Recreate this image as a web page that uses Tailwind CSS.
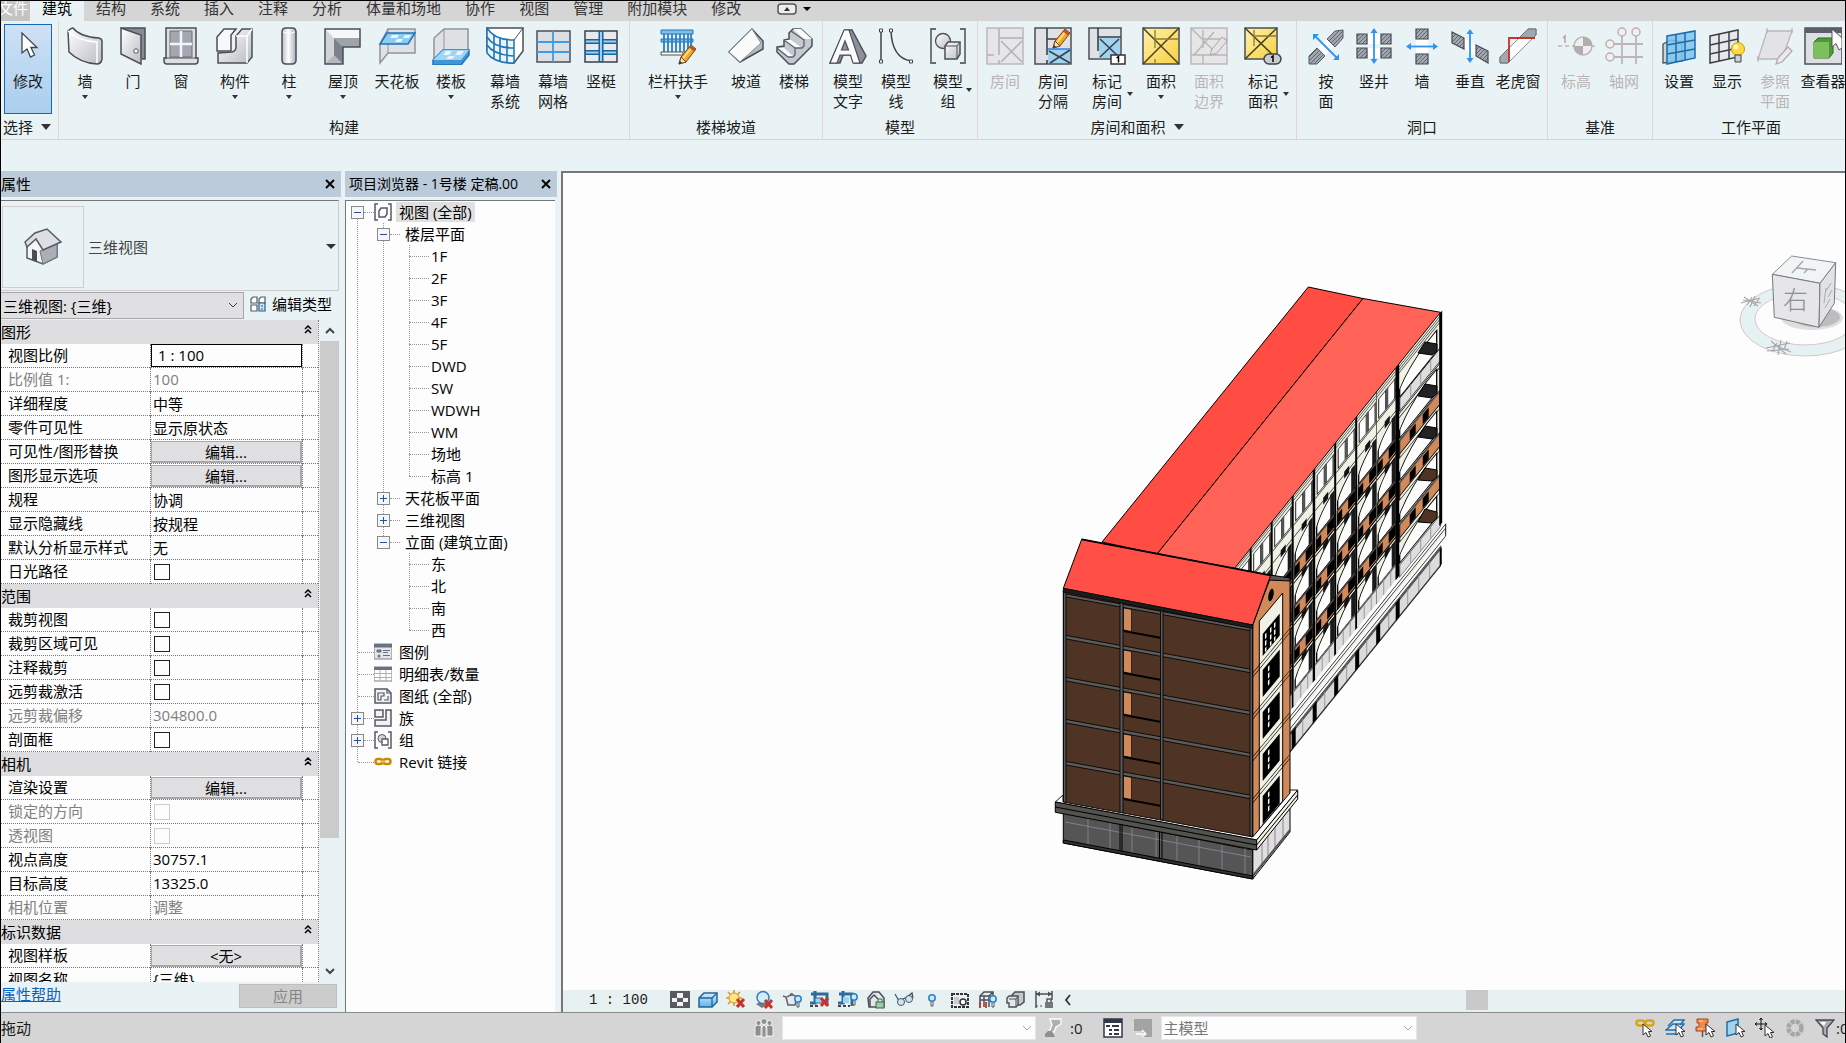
<!DOCTYPE html>
<html lang="zh-CN">
<head>
    <meta charset="UTF-8">
    <meta name="viewport" content="width=device-width, initial-scale=1.0">
    <title>1号楼 定稿.00 - 三维视图</title>
    <script src="https://cdn.jsdelivr.net/npm/@tailwindcss/browser@4"></script>
</head>
<body class="h-screen overflow-hidden flex flex-col border-t border-x border-black bg-[#e9f3f5] text-[15px] leading-5 text-[#1c1c1c] font-['Open_Sans','Noto_Sans_CJK_SC',sans-serif]">

    <!-- Shared fills and symbols -->
    <svg class="absolute w-0 h-0" aria-hidden="true">
        <defs>
            <linearGradient id="metal" x1="0" y1="0" x2="1" y2="1"><stop offset="0" stop-color="#ffffff"/><stop offset="1" stop-color="#b9bcc4"/></linearGradient>
            <linearGradient id="cyl" x1="0" y1="0" x2="1" y2="0"><stop offset="0" stop-color="#b9bcc4"/><stop offset=".45" stop-color="#fff"/><stop offset="1" stop-color="#a9adb6"/></linearGradient>
            <linearGradient id="blue" x1="0" y1="0" x2="0" y2="1"><stop offset="0" stop-color="#d4eefc"/><stop offset="1" stop-color="#5fb3e6"/></linearGradient>
            <linearGradient id="gold" x1="0" y1="0" x2="1" y2="1"><stop offset="0" stop-color="#fff1a8"/><stop offset="1" stop-color="#f6d043"/></linearGradient>
            <pattern id="hatch" width="4" height="4" patternUnits="userSpaceOnUse"><rect width="4" height="4" fill="#a3a8b0"/><path d="M0 4L4 0" stroke="#5f656e" stroke-width="1"/></pattern>
            <g id="pencil"><path d="M2 20L4 13L14 1L19 5L9 18Z" fill="#f5a623" stroke="#6b4a1d"/><path d="M6 14.500L15 3" stroke="#ffdf8a" stroke-width="2"/><path d="M14 1L19 5L17 7.500L12 3.500Z" fill="#b9542e"/><path d="M2 20L4 13L9 18Z" fill="#f3dfc1" stroke="#6b4a1d"/><path d="M2 20L3 17L5 19Z" fill="#333"/></g>
            <g id="arrowcur"><path d="M1 1V12L4 9.500L6 14L8.500 13L6.500 8.500H10Z" fill="#fff" stroke="#333"/></g>
            <g id="redx"><path d="M1 1L8 9M8 1L1 9" stroke="#c8322b" stroke-width="3"/></g>
            <g id="bulb"><circle cx="4" cy="4" r="3.200" fill="#cfeaff" stroke="#2b7fc4" stroke-width="1.500"/><path d="M3 8V12H5V8" fill="#fff" stroke="#555"/></g>
        </defs>
    </svg>

    <!-- Ribbon tabs -->
    <nav class="h-5 shrink-0 flex bg-[#d5d5d5] text-[#333] leading-[14px] whitespace-nowrap">
        <a href="#" class="w-[29px] flex justify-end pr-0.5 bg-[#c4c4c4] text-white overflow-hidden">文件</a>
        <a href="#" class="px-3 bg-[#e9f3f5] text-black">建筑</a>
        <a href="#" class="px-3">结构</a>
        <a href="#" class="px-3">系统</a>
        <a href="#" class="px-3">插入</a>
        <a href="#" class="px-3">注释</a>
        <a href="#" class="px-3">分析</a>
        <a href="#" class="px-3">体量和场地</a>
        <a href="#" class="px-3">协作</a>
        <a href="#" class="px-3">视图</a>
        <a href="#" class="px-3">管理</a>
        <a href="#" class="px-3">附加模块</a>
        <a href="#" class="px-3">修改</a>
        <button class="ml-6 pb-1 flex items-center gap-1.5" aria-label="功能区显示">
            <svg class="w-5 h-3" viewBox="0 0 20 12"><rect x="1" y="1" width="18" height="10" rx="3" fill="#eee" stroke="#555" stroke-width="1.500"/><path d="M7 8L10 4L13 8Z" fill="#333"/></svg>
            <svg class="w-2 h-1.5" viewBox="0 0 8 6"><path d="M0 1H8L4 5Z" fill="#000"/></svg>
        </button>
    </nav>

    <!-- Ribbon -->
    <div class="h-[119px] shrink-0 flex border-b border-[#d3d3d6] overflow-hidden whitespace-nowrap">
        <section class="w-[58px] shrink-0 flex flex-col border-r border-[#e6d4d4]">
            <div class="h-24 pl-[3px] pt-[3px]">
                <button class="w-12 h-[90px] pt-0.5 flex flex-col items-center gap-1.5 border border-[#1767b3] bg-linear-to-b from-[#cfe0f5] to-[#a9cfee]">
                    <svg class="size-[38px]" viewBox="0 0 38 38"><path d="M13 6V26L18 22L21.500 30L25.500 28L22 20.500H28Z" fill="#fff" stroke="#3f4650" stroke-width="1.300"/></svg>
                    <span>修改</span>
                </button>
            </div>
            <button class="h-5 pl-0.5 flex items-center gap-2">选择<svg class="w-2.5 h-1.5" viewBox="0 0 10 6"><path d="M0 0H10L5 6Z" fill="#333"/></svg></button>
        </section>

        <section class="shrink-0 flex flex-col border-r border-[#e6d4d4]">
            <div class="h-24 flex pl-0.5 pr-1">
                <button class="w-12 pt-1.5 flex flex-col items-center">
                    <svg class="size-[38px] mb-1.5" viewBox="0 0 38 38"><path d="M2 4Q5 1 7 1Q14 10 33 11Q36 12 36 14V32Q35 37 31 37Q14 36 3 25Z" fill="url(#metal)" stroke="#4b4f57" stroke-width="1.500"/><path d="M2 4Q12 14 31 15V36" fill="none" stroke="#fff" stroke-width="1.500"/></svg>
                    <span>墙</span><svg class="w-1.5 h-1 mt-1" viewBox="0 0 6 4"><path d="M0 0H6L3 4Z" fill="#333"/></svg>
                </button>
                <button class="w-12 pt-1.5 flex flex-col items-center">
                    <svg class="size-[38px] mb-1.5" viewBox="0 0 38 38"><path d="M7 1H31V32H28" fill="#868b94" stroke="#4b4f57" stroke-width="1.500"/><path d="M7 1L27 8V37L7 27Z" fill="url(#metal)" stroke="#4b4f57" stroke-width="1.500"/><circle cx="22" cy="24" r="2.200" fill="#fff" stroke="#4b4f57"/></svg>
                    <span>门</span>
                </button>
                <button class="w-12 pt-1.5 flex flex-col items-center">
                    <svg class="size-[38px] mb-1.5" viewBox="0 0 38 38"><path d="M4 1H34V31H36V34Q36 37 33 37H5Q2 37 2 34V31H4Z" fill="#dcdee2" stroke="#4b4f57" stroke-width="1.500"/><path d="M8 4H30V30H8Z" fill="#a3a7b0" stroke="#6b7079"/><path d="M19 4V30M8 17H30" stroke="#f4f5f7" stroke-width="2.500"/><path d="M3 31H35" stroke="#4b4f57"/></svg>
                    <span>窗</span>
                </button>
                <button class="w-15 pt-1.5 flex flex-col items-center">
                    <svg class="size-[38px] mb-1.5" viewBox="0 0 38 38"><path d="M8 2H20L15 8V24H1V10Z" fill="#f7f8f9" stroke="#4b4f57" stroke-width="1.500"/><path d="M26 2H36V30L31 36H2V26L16 25Q20 24 20 20V9Z" fill="url(#metal)" stroke="#4b4f57" stroke-width="1.500"/><path d="M20 9H31L36 2M31 9V36" fill="none" stroke="#fff" stroke-width="1.500"/></svg>
                    <span>构件</span><svg class="w-1.5 h-1 mt-1" viewBox="0 0 6 4"><path d="M0 0H6L3 4Z" fill="#333"/></svg>
                </button>
                <button class="w-12 pt-1.5 flex flex-col items-center">
                    <svg class="size-[38px] mb-1.5" viewBox="0 0 38 38"><path d="M12 5Q12 1 16 1H22Q26 1 26 5V33Q26 37 22 37H16Q12 37 12 33Z" fill="url(#cyl)" stroke="#4b4f57" stroke-width="1.500"/><path d="M13 5Q19 8 25 5" fill="none" stroke="#fff"/></svg>
                    <span>柱</span><svg class="w-1.5 h-1 mt-1" viewBox="0 0 6 4"><path d="M0 0H6L3 4Z" fill="#333"/></svg>
                </button>
                <button class="w-15 pt-1.5 flex flex-col items-center">
                    <svg class="size-[38px] mb-1.5" viewBox="0 0 38 38"><path d="M1 2H36V20H19V37H1Z" fill="#d2d4d9"/><path d="M1 2L10 11H36V2Z" fill="#f6f7f8"/><path d="M10 11H36V20H19Z" fill="#9fa3ac"/><path d="M10 11L19 20V37H10Z" fill="#7d818b"/><path d="M1 37L10 28L19 37Z" fill="#b5b8bf"/><path d="M1 2H36V20H19V37H1Z" fill="none" stroke="#4b4f57" stroke-width="1.500"/></svg>
                    <span>屋顶</span><svg class="w-1.5 h-1 mt-1" viewBox="0 0 6 4"><path d="M0 0H6L3 4Z" fill="#333"/></svg>
                </button>
                <button class="w-12 pt-1.5 flex flex-col items-center">
                    <svg class="size-[38px] mb-1.5" viewBox="0 0 38 38"><path d="M2 17L10 2H37V26H10L2 36Z" fill="#dfe1e5" stroke="#90949c" stroke-width="1.500"/><path d="M10 2V26" stroke="#90949c"/><path d="M9 6H37L30 17H2Z" fill="#8ecbf2" stroke="#1f74b8" stroke-width="1.500"/><path d="M14 8H21L19 11H12ZM27 8H33L31 11H25ZM19 12H25L23 15H17Z" fill="#e8f6ff"/></svg>
                    <span>天花板</span>
                </button>
                <button class="w-15 pt-1.5 flex flex-col items-center">
                    <svg class="size-[38px] mb-1.5" viewBox="0 0 38 38"><path d="M2 33V11L12 2H36V26" fill="#dfe1e5" stroke="#90949c" stroke-width="1.500"/><path d="M12 2V24" stroke="#90949c"/><path d="M11 23H37V28L29 38H1V33Z" fill="#3f97d6" stroke="#1f74b8" stroke-width="1.500"/><path d="M11 23H37L29 33H1Z" fill="#9fd4f6"/><path d="M14 24H20L17 28H11ZM26 24H32L29 28H23ZM17 29H23L20 32H14Z" fill="#e8f6ff"/></svg>
                    <span>楼板</span><svg class="w-1.5 h-1 mt-1" viewBox="0 0 6 4"><path d="M0 0H6L3 4Z" fill="#333"/></svg>
                </button>
                <button class="w-12 pt-1.5 flex flex-col items-center">
                    <svg class="size-[38px] mb-1.5" viewBox="0 0 38 38"><path d="M1 1H37V24L28 36Q8 36 1 24Z" fill="#fff" stroke="#4b4f57" stroke-width="1.500"/><path d="M1 1Q8 13 28 13V36Q8 36 1 26Z" fill="#e9f4fd" stroke="#1f74b8" stroke-width="1.500"/><path d="M28 13L37 1" stroke="#4b4f57"/><path d="M1 10Q8 21 28 21M1 18Q8 28 28 29M8 8V32M14 11V35M21 13V36" fill="none" stroke="#1f74b8" stroke-width="1.600"/></svg>
                    <span>幕墙</span><span>系统</span>
                </button>
                <button class="w-12 pt-1.5 flex flex-col items-center">
                    <svg class="size-[38px] mb-1.5" viewBox="0 0 38 38"><rect x="3" y="4" width="33" height="31" fill="#dbdee3" stroke="#4b4f57" stroke-width="1.500"/><path d="M19 4V35M3 15H36M3 25H36" stroke="#3d9be0" stroke-width="1.800"/></svg>
                    <span>幕墙</span><span>网格</span>
                </button>
                <button class="w-12 pt-1.5 flex flex-col items-center">
                    <svg class="size-[38px] mb-1.5" viewBox="0 0 38 38"><rect x="3" y="4" width="32" height="31" fill="#e8eaed" stroke="#3b4048" stroke-width="1.500"/><path d="M3 14.500H35M3 25.500H35" stroke="#17649f" stroke-width="5"/><path d="M4 14.500H34M4 25.500H34" stroke="#9fd0f2" stroke-width="2"/><path d="M19 4V35" stroke="#17649f" stroke-width="5"/><path d="M19 5V34" stroke="#9fd0f2" stroke-width="2"/></svg>
                    <span>竖梃</span>
                </button>
            </div>
            <h2 class="h-5 text-center">构建</h2>
        </section>

        <section class="shrink-0 flex flex-col border-r border-[#e6d4d4]">
            <div class="h-24 flex px-1">
                <button class="w-22 pt-1.5 flex flex-col items-center">
                    <svg class="size-[38px] mb-1.5" viewBox="0 0 38 38"><path d="M2 3H34V7H2ZM2 12H34V15H2Z" fill="#7fc0ee" stroke="#1f74b8"/><path d="M5 7V25M9 7V25M13 7V25M17 7V25M21 7V25M25 7V25M29 7V25M32 7V25" stroke="#2d80c2" stroke-width="1.800"/><path d="M2 25H24V28H2Z" fill="#fff" stroke="#4b4f57"/><use href="#pencil" x="18" y="17"/></svg>
                    <span>栏杆扶手</span><svg class="w-1.5 h-1 mt-1" viewBox="0 0 6 4"><path d="M0 0H6L3 4Z" fill="#333"/></svg>
                </button>
                <button class="w-12 pt-1.5 flex flex-col items-center">
                    <svg class="size-[38px] mb-1.5" viewBox="0 0 38 38"><path d="M2 25L25 2L36 14V22L13 35Z" fill="#b8bbc2" stroke="#4b4f57" stroke-width="1.500"/><path d="M2 25L25 2L34 16L13 35Z" fill="#fafbfb" stroke="#888c94"/></svg>
                    <span>坡道</span>
                </button>
                <button class="w-12 pt-1.5 flex flex-col items-center">
                    <svg class="size-[38px] mb-1.5" viewBox="0 0 38 38"><path d="M18 2H26L37 12V19L19 37H14L2 25V20L9 19V13L14 12V6Z" fill="#c6c9cf" stroke="#4b4f57" stroke-width="1.500"/><path d="M18 2H26L37 12H29ZM9 13H16L27 21H20ZM2 21H9L19 30H13Z" fill="#fafbfb"/><path d="M29 12V19L27 21H20V28L18 30H13L2 21M16 4L29 13M9 13L20 21" fill="none" stroke="#5d626b" stroke-width="1.300"/></svg>
                    <span>楼梯</span>
                </button>
            </div>
            <h2 class="h-5 text-center">楼梯坡道</h2>
        </section>

        <section class="shrink-0 flex flex-col border-r border-[#e6d4d4]">
            <div class="h-24 flex px-px">
                <button class="w-12 pt-1.5 flex flex-col items-center">
                    <svg class="size-[38px] mb-1.5" viewBox="0 0 38 38"><path d="M16 3H23L37 29L33 36H25L23 28H14L11 36H1Z" fill="#8d919a" stroke="#4b4f57" stroke-width="1.500"/><path d="M15 3H20L31 36H24L21.500 28H11L8 36H1ZM16 14L12.500 23H19.500Z" fill="#fbfbfc" fill-rule="evenodd" stroke="#4b4f57" stroke-width="1.200"/></svg>
                    <span>模型</span><span>文字</span>
                </button>
                <button class="w-12 pt-1.5 flex flex-col items-center">
                    <svg class="size-[38px] mb-1.5" viewBox="0 0 38 38"><path d="M4 4V34M14 4Q15 31 34 34" fill="none" stroke="#3f444c" stroke-width="1.500"/><path d="M2.500 2H5.500V5H2.500ZM2.500 33H5.500V36H2.500ZM12.500 2H15.500V5H12.500ZM32.500 33H35.500V36H32.500Z" fill="#fff" stroke="#3f444c"/></svg>
                    <span>模型</span><span>线</span>
                </button>
                <button class="w-14 pt-1.5 relative flex flex-col items-center">
                    <svg class="size-[38px] mb-1.5" viewBox="0 0 38 38"><path d="M7 2H2V36H7M31 2H36V36H31" fill="none" stroke="#666b74" stroke-width="1.800"/><circle cx="14" cy="14" r="7.500" fill="url(#metal)" stroke="#4b4f57" stroke-width="1.300"/><path d="M16 19L19 15H31V27L28 32H16Z" fill="url(#metal)" stroke="#4b4f57" stroke-width="1.500"/><path d="M16 19H28L31 15M28 19V32" fill="none" stroke="#4b4f57"/></svg>
                    <span>模型</span><span>组</span>
                    <svg class="absolute right-1 top-[67px] w-1.5 h-1" viewBox="0 0 6 4"><path d="M0 0H6L3 4Z" fill="#333"/></svg>
                </button>
            </div>
            <h2 class="h-5 text-center">模型</h2>
        </section>

        <section class="shrink-0 flex flex-col border-r border-[#e6d4d4]">
            <div class="h-24 flex px-[3px]">
                <button class="w-12 pt-1.5 flex flex-col items-center text-[#bbb4b6]" disabled>
                    <svg class="size-[38px] mb-1.5" viewBox="0 0 38 38"><rect x="1" y="1" width="36" height="36" fill="#e6e6e8" stroke="#bcb8ba" stroke-width="1.500"/><path d="M13 1V28M13 11H37M15 14L36 35M36 14L15 35M13 33V37M1 28H8" fill="none" stroke="#b4afb1" stroke-width="1.500"/></svg>
                    <span>房间</span>
                </button>
                <button class="w-12 pt-1.5 flex flex-col items-center">
                    <svg class="size-[38px] mb-1.5" viewBox="0 0 38 38"><rect x="1" y="1" width="36" height="36" fill="#dfe1e5" stroke="#4b4f57" stroke-width="1.500"/><rect x="14" y="22" width="22" height="14" fill="#9fd3f0"/><path d="M13 1V28M13 12H24M15 24L36 36M36 23L16 36M13 33V37" fill="none" stroke="#3b4048" stroke-width="1.600"/><path d="M14 22H36" stroke="#2d80f0" stroke-width="1.500"/><use href="#pencil" x="17" y="1"/></svg>
                    <span>房间</span><span>分隔</span>
                </button>
                <button class="w-15 pt-1.5 relative flex flex-col items-center">
                    <svg class="size-[38px] mb-1.5" viewBox="0 0 38 38"><rect x="1" y="1" width="32" height="31" fill="#dfe1e5" stroke="#4b4f57" stroke-width="1.500"/><rect x="11" y="10" width="21" height="21" fill="#9fd3f0"/><path d="M10 1V24M10 10H33M12 12L31 30M31 12L12 30" fill="none" stroke="#3b4048" stroke-width="1.600"/><rect x="23" y="28" width="14" height="9" fill="#fff" stroke="#333" stroke-width="1.500"/><path d="M28.500 31L30.500 29.500V35.500" fill="none" stroke="#000" stroke-width="1.500"/></svg>
                    <span>标记</span><span>房间</span>
                    <svg class="absolute right-1 top-[71px] w-1.5 h-1" viewBox="0 0 6 4"><path d="M0 0H6L3 4Z" fill="#333"/></svg>
                </button>
                <button class="w-12 pt-1.5 flex flex-col items-center">
                    <svg class="size-[38px] mb-1.5" viewBox="0 0 38 38"><rect x="1" y="1" width="36" height="36" fill="url(#gold)" stroke="#4b4f57" stroke-width="1.500"/><path d="M1 1L37 37M37 1L1 37" stroke="#4a4222" stroke-width="1.500"/><path d="M13 3V21M13 12H37M13 32V37" stroke="#8a7c3a" stroke-width="1.300"/></svg>
                    <span>面积</span><svg class="w-1.5 h-1 mt-1" viewBox="0 0 6 4"><path d="M0 0H6L3 4Z" fill="#333"/></svg>
                </button>
                <button class="w-12 pt-1.5 flex flex-col items-center text-[#bbb4b6]" disabled>
                    <svg class="size-[38px] mb-1.5" viewBox="0 0 38 38"><rect x="1" y="1" width="36" height="36" fill="#e6e6e8" stroke="#bcb8ba" stroke-width="1.500"/><path d="M1 1L24 24M24 5L4 28M13 3V21M13 12H37M1 28H37M13 28V37" fill="none" stroke="#b9b5b7" stroke-width="1.400"/><path d="M20 28L22 22L32 10L37 14L27 26Z" fill="#e4e2e3" stroke="#aaa6a8"/></svg>
                    <span>面积</span><span>边界</span>
                </button>
                <button class="w-15 pt-1.5 relative flex flex-col items-center">
                    <svg class="size-[38px] mb-1.5" viewBox="0 0 38 38"><rect x="1" y="1" width="32" height="31" fill="url(#gold)" stroke="#4b4f57" stroke-width="1.500"/><path d="M1 1L33 32M33 1L1 32" stroke="#4a4222" stroke-width="1.500"/><path d="M10 3V19M10 9H33" stroke="#8a7c3a" stroke-width="1.300"/><rect x="20" y="27" width="17" height="10" rx="5" fill="#c9ccd1" stroke="#444" stroke-width="1.500"/><path d="M27 30.500L29 29V35" fill="none" stroke="#000" stroke-width="1.500"/></svg>
                    <span>标记</span><span>面积</span>
                    <svg class="absolute right-1 top-[71px] w-1.5 h-1" viewBox="0 0 6 4"><path d="M0 0H6L3 4Z" fill="#333"/></svg>
                </button>
            </div>
            <button class="h-5 flex justify-center items-center gap-2">房间和面积<svg class="w-2.5 h-1.5" viewBox="0 0 10 6"><path d="M0 0H10L5 6Z" fill="#333"/></svg></button>
        </section>

        <section class="shrink-0 flex flex-col border-r border-[#e6d4d4]">
            <div class="h-24 flex px-[5px]">
                <button class="w-12 pt-1.5 flex flex-col items-center">
                    <svg class="size-[38px] mb-1.5" viewBox="0 0 38 38"><path d="M12 20L22 10L29 17L18 28Z" fill="#fff"/><path d="M20 12L28 4L36 3V11L28 20Z" fill="url(#hatch)" stroke="#555a63"/><path d="M2 37V29L10 21L18 29L10 37Z" fill="url(#hatch)" stroke="#555a63"/><path d="M8 9L30 31" stroke="#2f93f0" stroke-width="1.800"/><path d="M6 7H12L6 13ZM32 33H26L32 27Z" fill="#2f93f0"/></svg>
                    <span>按</span><span>面</span>
                </button>
                <button class="w-12 pt-1.5 flex flex-col items-center">
                    <svg class="size-[38px] mb-1.5" viewBox="0 0 38 38"><path d="M13 7H25V17H13ZM13 21H25V31H13Z" fill="#fff"/><path d="M2 7H12V17H2ZM26 7H36V17H26ZM2 21H12V31H2ZM26 21H36V31H26Z" fill="url(#hatch)" stroke="#444952" stroke-width="1.200"/><path d="M19 4V34" stroke="#2f93f0" stroke-width="1.800"/><path d="M15.500 6L19 1L22.500 6ZM15.500 32L19 37L22.500 32Z" fill="#2f93f0"/></svg>
                    <span>竖井</span>
                </button>
                <button class="w-12 pt-1.5 flex flex-col items-center">
                    <svg class="size-[38px] mb-1.5" viewBox="0 0 38 38"><path d="M13 13H25V26H13Z" fill="#fff"/><path d="M13 2H25V12H13ZM13 27H25V37H13Z" fill="url(#hatch)" stroke="#444952" stroke-width="1.200"/><path d="M6 19.500H32" stroke="#2f93f0" stroke-width="1.800"/><path d="M8 16L3 19.500L8 23ZM30 16L35 19.500L30 23Z" fill="#2f93f0"/></svg>
                    <span>墙</span>
                </button>
                <button class="w-12 pt-1.5 flex flex-col items-center">
                    <svg class="size-[38px] mb-1.5" viewBox="0 0 38 38"><path d="M13 11L25 18V29L13 22Z" fill="#fff"/><path d="M1 5L13 11V22L1 16ZM25 18L37 24V36L25 29Z" fill="url(#hatch)" stroke="#444952" stroke-width="1.200"/><path d="M19 6V33" stroke="#2f93f0" stroke-width="1.800"/><path d="M15.500 7L19 2L22.500 7ZM15.500 31L19 36L22.500 31Z" fill="#2f93f0"/></svg>
                    <span>垂直</span>
                </button>
                <button class="w-12 pt-1.5 flex flex-col items-center">
                    <svg class="size-[38px] mb-1.5" viewBox="0 0 38 38"><path d="M1 36V30L29 2H37V8L9 36Z" fill="#fff" stroke="#8b8f97"/><path d="M1 36V30L10 21V35L9 36ZM20 11L29 2H37V8L34 11Z" fill="#a3a8b0" stroke="#6b7079"/><path d="M10 35V11H36" fill="none" stroke="#c8322b" stroke-width="1.800"/></svg>
                    <span>老虎窗</span>
                </button>
            </div>
            <h2 class="h-5 text-center">洞口</h2>
        </section>

        <section class="shrink-0 flex flex-col border-r border-[#e6d4d4]">
            <div class="h-24 flex px-1 text-[#bbb4b6]">
                <button class="w-12 pt-1.5 flex flex-col items-center" disabled>
                    <svg class="size-[38px] mb-1.5" viewBox="0 0 38 38"><path d="M1 19H5M8 19H12M15 19H38" stroke="#c3b3b5" stroke-width="1.500"/><path d="M6 11L8 9V16" fill="none" stroke="#b5a5a7" stroke-width="1.500"/><circle cx="26" cy="19" r="9" fill="#f0eeee" stroke="#bdb6b8" stroke-width="1.500"/><path d="M26 19V10A9 9 0 0 1 35 19ZM26 19V28A9 9 0 0 1 17 19Z" fill="#b1adae"/></svg>
                    <span>标高</span>
                </button>
                <button class="w-12 pt-1.5 flex flex-col items-center" disabled>
                    <svg class="size-[38px] mb-1.5" viewBox="0 0 38 38"><path d="M17 9V37M31 9V37M9 17H38M9 30H38" stroke="#bdb6b8" stroke-width="1.800"/><g fill="#f2efef" stroke="#bdb0b2" stroke-width="1.500"><circle cx="17" cy="5" r="4"/><circle cx="31" cy="5" r="4"/><circle cx="5" cy="17" r="4"/><circle cx="5" cy="30" r="4"/></g></svg>
                    <span>轴网</span>
                </button>
            </div>
            <h2 class="h-5 text-center">基准</h2>
        </section>

        <section class="shrink-0 flex flex-col">
            <div class="h-24 flex px-0.5">
                <button class="w-12 pt-1.5 flex flex-col items-center">
                    <svg class="size-[38px] mb-1.5" viewBox="0 0 38 38"><path d="M3 17L11 13L22 15V34L3 36Z" fill="#cfd3d8" stroke="#4b4f57" stroke-width="1.300"/><path d="M7 9L35 4V31L7 37Z" fill="#7fc3ee" fill-opacity=".85" stroke="#1b6cab" stroke-width="1.500"/><path d="M16 7.500V35M25 6V33M7 18L35 13M7 27L35 22" stroke="#1b6cab" stroke-width="1.500"/></svg>
                    <span>设置</span>
                </button>
                <button class="w-12 pt-1.5 flex flex-col items-center">
                    <svg class="size-[38px] mb-1.5" viewBox="0 0 38 38"><path d="M2 9L30 3V30L2 36Z" fill="#e6e8eb" stroke="#3b4048" stroke-width="1.500"/><path d="M11 7V34M21 5V32M2 18L30 12M2 27L30 21" stroke="#3b4048" stroke-width="1.500"/><circle cx="30" cy="22" r="6.500" fill="#ffd93b" stroke="#c79a14"/><circle cx="28" cy="20" r="2.500" fill="#fff7c4"/><path d="M27 28H33V35H27Z" fill="#cdd0d5" stroke="#3b4048"/></svg>
                    <span>显示</span>
                </button>
                <button class="w-12 pt-1.5 flex flex-col items-center text-[#bbb4b6]" disabled>
                    <svg class="size-[38px] mb-1.5" viewBox="0 0 38 38"><path d="M11 4H36L26 32H2Z" fill="#e3e2e4" stroke="#bdb6b8" stroke-width="1.300"/><path d="M11 1V6M36 1V6M2 29V35" stroke="#b5a5a7"/><path d="M20 37L22 31L32 20L36 24L26 35Z" fill="#eceaea" stroke="#b0abad" stroke-width="1.300"/></svg>
                    <span>参照</span><span>平面</span>
                </button>
                <button class="w-12 pt-1.5 flex flex-col items-center">
                    <svg class="size-[38px] mb-1.5" viewBox="0 0 38 38"><rect x="1" y="1" width="37" height="36" fill="#dcdee2" stroke="#4b4f57" stroke-width="1.500"/><rect x="1" y="1" width="37" height="5" fill="#5a5f69"/><path d="M10 15L14 11H29V26L25 31H10Z" fill="#4c9a34" stroke="#2a6b18"/><path d="M10 15H25V31H10Z" fill="#7cc05e"/><path d="M28 2V20L32 16.500L35 23L38 21V11Z" fill="#fff" stroke="#555"/></svg>
                    <span>查看器</span>
                </button>
            </div>
            <h2 class="h-5 text-center">工作平面</h2>
        </section>
    </div>

    <!-- Options bar -->
    <div class="h-[31px] shrink-0"></div>

    <main class="flex-1 min-h-0 flex">
        <!-- Properties palette -->
        <aside class="w-[340px] shrink-0 flex flex-col text-black">
            <header class="h-[26px] shrink-0 flex items-center justify-between pr-1 bg-[#bccbda]">
                <h1>属性</h1>
                <button aria-label="关闭属性"><svg class="size-3.5" viewBox="0 0 14 14"><path d="M3 3L11 11M11 3L3 11" stroke="#000" stroke-width="2"/></svg></button>
            </header>
            <button class="mt-[3px] mr-0.5 h-[91px] pt-0.5 shrink-0 flex items-center pl-px pr-0.5 border-t border-r border-b border-t-[#777] border-r-[#ccc] border-b-[#ccc] text-[#444] text-left">
                <span class="w-[82px] h-[82px] flex items-center justify-center border border-[#d2cccf]">
                    <svg class="size-10" viewBox="0 0 40 40"><path d="M4 18V31L20 37L34 30V15L22 4Z" fill="#f4f5f6" stroke="#555a63" stroke-width="1.500"/><path d="M17 24L34 15V30L20 37Z" fill="#a9aeb8" stroke="#6d727c"/><path d="M2 15L12 6L24 2L38 15L20 23L13 12L4 20Z" fill="#dcdee3" stroke="#555a63" stroke-width="1.500"/><path d="M9 22L14 24V35L9 33Z" fill="#4a4e57"/></svg>
                </span>
                <span class="flex-1 pl-1">三维视图</span>
                <svg class="w-2.5 h-1.5" viewBox="0 0 10 6"><path d="M0 0H10L5 5Z" fill="#333"/></svg>
            </button>
            <div class="h-[29px] shrink-0 flex items-center">
                <div class="relative w-[243px]">
                    <select aria-label="实例" class="block appearance-none w-full h-[27px] pl-0.5 border border-l-0 border-[#a9a6a9] bg-[#e0dfe1]"><option>三维视图: {三维}</option></select>
                    <svg class="absolute right-1.5 top-2.5 w-2.5 h-1.5 pointer-events-none" viewBox="0 0 10 6"><path d="M1 1L5 5L9 1" fill="none" stroke="#444"/></svg>
                </div>
                <button class="ml-1.5 mb-1 flex items-center gap-1.5">
                    <svg class="size-4" viewBox="0 0 16 16"><g fill="#fff" stroke="#555a63" stroke-width="1.200"><path d="M1 3L3 1H7V7H1ZM9 3L11 1H15V7H9ZM1 9H7V15H1Z"/></g><path d="M9 7H15V15H9Z" fill="#cfe6f8" stroke="#2a5a8a" stroke-width="1.200"/><path d="M11 10H13M11 13H13" stroke="#2a5a8a"/></svg>
                    编辑类型
                </button>
            </div>
            <div class="flex-1 min-h-0 flex pr-0.5">
                <div class="flex-1 overflow-hidden">
                    <table class="w-full table-fixed border-separate border-spacing-0 bg-[#fdfdfd] border-r border-dotted border-[#777] [&_td]:h-6 [&_td]:p-0 [&_td]:border-b [&_td]:border-dotted [&_td]:border-[#777] [&_td+td]:border-l [&_td:first-child]:pl-[7px] [&_th]:h-6 [&_th]:p-0 [&_th]:bg-[#dddcdf] [&_th]:text-left [&_th]:font-normal [&_label]:block [&_label]:pb-0.5 [&_input]:pb-0.5 [&_select]:pb-0.5">
                        <colgroup><col class="w-[149px]"><col><col class="w-4"></colgroup>
                        <tbody>
                            <tr><th colspan="3"><span class="flex justify-between pr-1.5">图形<svg class="w-2 h-2.5 mt-0.5" viewBox="0 0 8 10"><path d="M1 5L4 2L7 5M1 9L4 6L7 9" fill="none" stroke="#000" stroke-width="1.500"/></svg></span></th></tr>
                            <tr><td><label for="scale">视图比例</label></td><td><select id="scale" class="block appearance-none w-full h-[23px] pl-1.5 leading-5 border border-black"><option>1 : 100</option></select></td><td></td></tr>
                            <tr class="text-[#808080]"><td><label for="ratio">比例值 1:</label></td><td><input id="ratio" value="100" disabled class="block w-full h-5 pl-0.5"></td><td></td></tr>
                            <tr><td><label for="detail">详细程度</label></td><td><select id="detail" class="block appearance-none w-full h-5 pl-0.5"><option>中等</option></select></td><td></td></tr>
                            <tr><td><label for="parts">零件可见性</label></td><td><select id="parts" class="block appearance-none w-full h-5 pl-0.5"><option>显示原状态</option></select></td><td></td></tr>
                            <tr><td><label for="vg">可见性/图形替换</label></td><td><button id="vg" class="block w-full h-[22px] leading-5 border border-b-2 border-r-2 border-[#a9a9ad] bg-[#e0e0e3]">编辑...</button></td><td></td></tr>
                            <tr><td><label for="gdo">图形显示选项</label></td><td><button id="gdo" class="block w-full h-[22px] leading-5 border border-b-2 border-r-2 border-[#a9a9ad] bg-[#e0e0e3]">编辑...</button></td><td></td></tr>
                            <tr><td><label for="disc">规程</label></td><td><select id="disc" class="block appearance-none w-full h-5 pl-0.5"><option>协调</option></select></td><td></td></tr>
                            <tr><td><label for="hid">显示隐藏线</label></td><td><select id="hid" class="block appearance-none w-full h-5 pl-0.5"><option>按规程</option></select></td><td></td></tr>
                            <tr><td><label for="ana">默认分析显示样式</label></td><td><select id="ana" class="block appearance-none w-full h-5 pl-0.5"><option>无</option></select></td><td></td></tr>
                            <tr><td><label for="sun">日光路径</label></td><td><input type="checkbox" id="sun" class="block appearance-none size-4 ml-[3px] border border-[#222]"></td><td></td></tr>
                            <tr><th colspan="3"><span class="flex justify-between pr-1.5">范围<svg class="w-2 h-2.5 mt-0.5" viewBox="0 0 8 10"><path d="M1 5L4 2L7 5M1 9L4 6L7 9" fill="none" stroke="#000" stroke-width="1.500"/></svg></span></th></tr>
                            <tr><td><label for="crop">裁剪视图</label></td><td><input type="checkbox" id="crop" class="block appearance-none size-4 ml-[3px] border border-[#222]"></td><td></td></tr>
                            <tr><td><label for="cropvis">裁剪区域可见</label></td><td><input type="checkbox" id="cropvis" class="block appearance-none size-4 ml-[3px] border border-[#222]"></td><td></td></tr>
                            <tr><td><label for="anno">注释裁剪</label></td><td><input type="checkbox" id="anno" class="block appearance-none size-4 ml-[3px] border border-[#222]"></td><td></td></tr>
                            <tr><td><label for="far">远剪裁激活</label></td><td><input type="checkbox" id="far" class="block appearance-none size-4 ml-[3px] border border-[#222]"></td><td></td></tr>
                            <tr class="text-[#808080]"><td><label for="faroff">远剪裁偏移</label></td><td><input id="faroff" value="304800.0" disabled class="block w-full h-5 pl-0.5"></td><td></td></tr>
                            <tr><td><label for="sect">剖面框</label></td><td><input type="checkbox" id="sect" class="block appearance-none size-4 ml-[3px] border border-[#222]"></td><td></td></tr>
                            <tr><th colspan="3"><span class="flex justify-between pr-1.5">相机<svg class="w-2 h-2.5 mt-0.5" viewBox="0 0 8 10"><path d="M1 5L4 2L7 5M1 9L4 6L7 9" fill="none" stroke="#000" stroke-width="1.500"/></svg></span></th></tr>
                            <tr><td><label for="render">渲染设置</label></td><td><button id="render" class="block w-full h-[22px] leading-5 border border-b-2 border-r-2 border-[#a9a9ad] bg-[#e0e0e3]">编辑...</button></td><td></td></tr>
                            <tr class="text-[#808080]"><td><label for="lock">锁定的方向</label></td><td><input type="checkbox" id="lock" disabled class="block appearance-none size-4 ml-[3px] border border-[#ccc]"></td><td></td></tr>
                            <tr class="text-[#808080]"><td><label for="persp">透视图</label></td><td><input type="checkbox" id="persp" disabled class="block appearance-none size-4 ml-[3px] border border-[#ccc]"></td><td></td></tr>
                            <tr><td><label for="eye">视点高度</label></td><td><input id="eye" value="30757.1" class="block w-full h-5 pl-0.5"></td><td></td></tr>
                            <tr><td><label for="target">目标高度</label></td><td><input id="target" value="13325.0" class="block w-full h-5 pl-0.5"></td><td></td></tr>
                            <tr class="text-[#808080]"><td><label for="campos">相机位置</label></td><td><input id="campos" value="调整" disabled class="block w-full h-5 pl-0.5"></td><td></td></tr>
                            <tr><th colspan="3"><span class="flex justify-between pr-1.5">标识数据<svg class="w-2 h-2.5 mt-0.5" viewBox="0 0 8 10"><path d="M1 5L4 2L7 5M1 9L4 6L7 9" fill="none" stroke="#000" stroke-width="1.500"/></svg></span></th></tr>
                            <tr><td><label for="tmpl">视图样板</label></td><td><button id="tmpl" class="block w-full h-[22px] leading-5 border border-b-2 border-r-2 border-[#a9a9ad] bg-[#e0e0e3]">&lt;无&gt;</button></td><td></td></tr>
                            <tr><td><label for="vname">视图名称</label></td><td><input id="vname" value="{三维}" class="block w-full h-5 pl-0.5"></td><td></td></tr>
                        </tbody>
                    </table>
                </div>
                <div class="w-5 pl-px flex flex-col items-center">
                    <svg class="w-2.5 h-[21px]" viewBox="0 0 10 21"><path d="M1 13L5 9L9 13" fill="none" stroke="#444" stroke-width="2"/></svg>
                    <div class="w-full h-3/4 bg-[#cbcbcc]"></div>
                    <svg class="mt-auto w-2.5 h-[21px]" viewBox="0 0 10 21"><path d="M1 8L5 12L9 8" fill="none" stroke="#444" stroke-width="2"/></svg>
                </div>
            </div>
            <footer class="h-[30px] shrink-0 flex items-start justify-between pt-0.5 pr-1">
                <a href="#" class="text-[#0a62c4] underline">属性帮助</a>
                <button disabled class="w-[98px] h-6 leading-5 border border-[#bfbfbf] bg-[#cccccd] text-[#858585]">应用</button>
            </footer>
        </aside>

        <!-- Project browser -->
        <aside class="ml-1 w-[212px] shrink-0 flex flex-col text-black whitespace-nowrap">
            <header class="h-[26px] shrink-0 flex items-center justify-between pl-1 pr-1 bg-[#bccbda]">
                <h1 class="text-[14px]">项目浏览器 - 1号楼 定稿.00</h1>
                <button aria-label="关闭项目浏览器"><svg class="size-3.5" viewBox="0 0 14 14"><path d="M3 3L11 11M11 3L3 11" stroke="#000" stroke-width="2"/></svg></button>
            </header>
            <div class="mt-[3px] mr-0.5 flex-1 border-t border-l border-[#777] bg-[#fdfdfd]">
                <ul class="relative [&_li>div]:h-[22px] [&_li>div]:flex [&_li>div]:items-center">
                    <span class="absolute left-[11px] top-3 bottom-[11px] border-l border-dotted border-[#999]"></span>
                    <li>
                        <div>
                            <button aria-label="折叠" class="relative ml-[5px] size-[13px] border border-[#888] bg-[#f6f6f6]"><svg class="size-[11px]" viewBox="0 0 11 11"><path d="M2 5.500H9" stroke="#2a4f9a"/></svg></button>
                            <span class="w-2.5 border-t border-dotted border-[#999]"></span>
                            <svg class="size-[18px]" viewBox="0 0 18 18"><path d="M4 1H1V17H4M14 1H17V17H14" fill="none" stroke="#555a63" stroke-width="1.500"/><path d="M5 8L7 5H13V11L11 14H5Z" fill="#fff" stroke="#555a63" stroke-width="1.500"/></svg>
                            <a href="#" class="ml-1 px-[3px] bg-[#e0e0e0]">视图 (全部)</a>
                        </div>
                        <ul class="relative">
                            <span class="absolute left-[37px] top-0 bottom-[99px] border-l border-dotted border-[#999]"></span>
                            <li>
                                <div>
                                    <button aria-label="折叠" class="relative ml-[31px] size-[13px] border border-[#888] bg-[#f6f6f6]"><svg class="size-[11px]" viewBox="0 0 11 11"><path d="M2 5.500H9" stroke="#2a4f9a"/></svg></button>
                                    <span class="w-2.5 mr-[5px] border-t border-dotted border-[#999]"></span>
                                    <a href="#">楼层平面</a>
                                </div>
                                <ul class="relative">
                                    <span class="absolute left-[63px] top-0 bottom-[11px] border-l border-dotted border-[#999]"></span>
                                    <li><div><span class="ml-[63px] w-5 mr-0.5 border-t border-dotted border-[#999]"></span><a href="#">1F</a></div></li>
                                    <li><div><span class="ml-[63px] w-5 mr-0.5 border-t border-dotted border-[#999]"></span><a href="#">2F</a></div></li>
                                    <li><div><span class="ml-[63px] w-5 mr-0.5 border-t border-dotted border-[#999]"></span><a href="#">3F</a></div></li>
                                    <li><div><span class="ml-[63px] w-5 mr-0.5 border-t border-dotted border-[#999]"></span><a href="#">4F</a></div></li>
                                    <li><div><span class="ml-[63px] w-5 mr-0.5 border-t border-dotted border-[#999]"></span><a href="#">5F</a></div></li>
                                    <li><div><span class="ml-[63px] w-5 mr-0.5 border-t border-dotted border-[#999]"></span><a href="#">DWD</a></div></li>
                                    <li><div><span class="ml-[63px] w-5 mr-0.5 border-t border-dotted border-[#999]"></span><a href="#">SW</a></div></li>
                                    <li><div><span class="ml-[63px] w-5 mr-0.5 border-t border-dotted border-[#999]"></span><a href="#">WDWH</a></div></li>
                                    <li><div><span class="ml-[63px] w-5 mr-0.5 border-t border-dotted border-[#999]"></span><a href="#">WM</a></div></li>
                                    <li><div><span class="ml-[63px] w-5 mr-0.5 border-t border-dotted border-[#999]"></span><a href="#">场地</a></div></li>
                                    <li><div><span class="ml-[63px] w-5 mr-0.5 border-t border-dotted border-[#999]"></span><a href="#">标高 1</a></div></li>
                                </ul>
                            </li>
                            <li><div>
                                <button aria-label="展开" class="relative ml-[31px] size-[13px] border border-[#888] bg-[#f6f6f6]"><svg class="size-[11px]" viewBox="0 0 11 11"><path d="M2 5.500H9M5.500 2V9" stroke="#2a4f9a"/></svg></button>
                                <span class="w-2.5 mr-[5px] border-t border-dotted border-[#999]"></span>
                                <a href="#">天花板平面</a>
                            </div></li>
                            <li><div>
                                <button aria-label="展开" class="relative ml-[31px] size-[13px] border border-[#888] bg-[#f6f6f6]"><svg class="size-[11px]" viewBox="0 0 11 11"><path d="M2 5.500H9M5.500 2V9" stroke="#2a4f9a"/></svg></button>
                                <span class="w-2.5 mr-[5px] border-t border-dotted border-[#999]"></span>
                                <a href="#">三维视图</a>
                            </div></li>
                            <li>
                                <div>
                                    <button aria-label="折叠" class="relative ml-[31px] size-[13px] border border-[#888] bg-[#f6f6f6]"><svg class="size-[11px]" viewBox="0 0 11 11"><path d="M2 5.500H9" stroke="#2a4f9a"/></svg></button>
                                    <span class="w-2.5 mr-[5px] border-t border-dotted border-[#999]"></span>
                                    <a href="#">立面 (建筑立面)</a>
                                </div>
                                <ul class="relative">
                                    <span class="absolute left-[63px] top-0 bottom-[11px] border-l border-dotted border-[#999]"></span>
                                    <li><div><span class="ml-[63px] w-5 mr-0.5 border-t border-dotted border-[#999]"></span><a href="#">东</a></div></li>
                                    <li><div><span class="ml-[63px] w-5 mr-0.5 border-t border-dotted border-[#999]"></span><a href="#">北</a></div></li>
                                    <li><div><span class="ml-[63px] w-5 mr-0.5 border-t border-dotted border-[#999]"></span><a href="#">南</a></div></li>
                                    <li><div><span class="ml-[63px] w-5 mr-0.5 border-t border-dotted border-[#999]"></span><a href="#">西</a></div></li>
                                </ul>
                            </li>
                        </ul>
                    </li>
                    <li><div>
                        <span class="ml-3 w-4 border-t border-dotted border-[#999]"></span>
                        <svg class="size-[18px]" viewBox="0 0 18 18"><rect y="1" width="18" height="15" fill="#e3e5e8" stroke="#7b8089"/><rect y="1" width="18" height="3.500" fill="#6b7180"/><path d="M3 7H7V9H3ZM9 7.500H16M9 9.500H14M9 12.500H16" stroke="#6b7180" fill="#6b7180"/><circle cx="5" cy="13" r="1.500" fill="#6b7180"/></svg>
                        <a href="#" class="ml-[7px]">图例</a>
                    </div></li>
                    <li><div>
                        <span class="ml-3 w-4 border-t border-dotted border-[#999]"></span>
                        <svg class="size-[18px]" viewBox="0 0 18 18"><rect y="2" width="18" height="14" fill="#fff" stroke="#7b8089"/><rect y="2" width="18" height="3" fill="#6b7180"/><path d="M0 8.500H18M0 12.500H18M6 5V16M12 5V16" stroke="#b9a9ab"/></svg>
                        <a href="#" class="ml-[7px]">明细表/数量</a>
                    </div></li>
                    <li><div>
                        <span class="ml-3 w-4 border-t border-dotted border-[#999]"></span>
                        <svg class="size-[18px]" viewBox="0 0 18 18"><path d="M1 2H13L17 6V16H1Z" fill="#f1f2f4" stroke="#555a63" stroke-width="1.500"/><path d="M13 2V6H17M4 13V6H10V9H7V13ZM10 13H14V9" fill="none" stroke="#555a63" stroke-width="1.200"/></svg>
                        <a href="#" class="ml-[7px]">图纸 (全部)</a>
                    </div></li>
                    <li><div>
                        <button aria-label="展开" class="relative ml-[5px] size-[13px] border border-[#888] bg-[#f6f6f6]"><svg class="size-[11px]" viewBox="0 0 11 11"><path d="M2 5.500H9M5.500 2V9" stroke="#2a4f9a"/></svg></button>
                        <span class="w-2.5 border-t border-dotted border-[#999]"></span>
                        <svg class="size-[18px]" viewBox="0 0 18 18"><path d="M1 1H9V8H1ZM12 1H17V17H1V11H12Z" fill="#f1f2f4" stroke="#555a63" stroke-width="1.500"/></svg>
                        <a href="#" class="ml-[7px]">族</a>
                    </div></li>
                    <li><div>
                        <button aria-label="展开" class="relative ml-[5px] size-[13px] border border-[#888] bg-[#f6f6f6]"><svg class="size-[11px]" viewBox="0 0 11 11"><path d="M2 5.500H9M5.500 2V9" stroke="#2a4f9a"/></svg></button>
                        <span class="w-2.5 border-t border-dotted border-[#999]"></span>
                        <svg class="size-[18px]" viewBox="0 0 18 18"><path d="M4 1H1V17H4M14 1H17V17H14" fill="none" stroke="#555a63" stroke-width="1.500"/><circle cx="8" cy="7.500" r="4" fill="#d3d6db" stroke="#555a63"/><path d="M8 8H14V14H8Z" fill="#fff" stroke="#555a63" stroke-width="1.300"/></svg>
                        <a href="#" class="ml-[7px]">组</a>
                    </div></li>
                    <li><div>
                        <span class="ml-3 w-4 border-t border-dotted border-[#999]"></span>
                        <svg class="size-[18px]" viewBox="0 0 18 18"><g fill="none" stroke="#c8890d" stroke-width="2.500"><rect x="1.500" y="6" width="7" height="5" rx="2.500"/><rect x="9.500" y="6" width="7" height="5" rx="2.500"/></g><path d="M6 8.500H12" stroke="#f3c33a" stroke-width="2"/></svg>
                        <a href="#" class="ml-[7px]">Revit 链接</a>
                    </div></li>
                </ul>
            </div>
        </aside>

        <!-- Drawing area -->
        <section class="ml-1 flex-1 min-w-0 flex flex-col border-t-2 border-l-2 border-[#777]">
            <div class="relative flex-1 bg-[#fdfdfd] overflow-hidden">
                <svg class="absolute left-[487px] top-[107px] w-[400px] h-[605px]" viewBox="1050 280 400 605" stroke-linejoin="round">
                    <defs>
                        <g id="storey">
                            <path d="M-19.500 0V-9Q-16 -18 -4 -23V0Z" fill="#fdfdfd" stroke="#000" stroke-width="1.300"/>
                            <path d="M-6 -24H-2V0H-6Z" fill="#1a1a1a"/>
                            <path d="M-20 0H-1V15H-20Z" fill="#d2895a" stroke="#000"/>
                            <path d="M-20 1H-1" stroke="#444" stroke-width="2.500"/>
                            <path d="M-9 2H-2V13H-9ZM-20 4H-15V14H-20Z" fill="#000"/>
                            <path d="M-21 15.500H0M-21 19H0" stroke="#000" stroke-width="1.300"/>
                            <path d="M-13 16H-8V23H-13Z" fill="#111"/>
                        </g>
                        <g id="bay">
                            <path d="M-21 0H0V212H-21Z" fill="#f0f1e4"/>
                            <path d="M-21 3H0M-21 6H0" stroke="#444"/>
                            <path d="M-19 10H-12V29H-19ZM-10 10H-3V29H-10Z" fill="#fdfdfd" stroke="#222"/>
                            <path d="M-11 9V30M-2.500 9V30" stroke="#555" stroke-width="2"/>
                            <path d="M-21 31H0M-21 43H0" stroke="#222"/>
                            <path d="M-13 40H-8V47H-13Z" fill="#111"/>
                            <use href="#storey" y="70"/><use href="#storey" y="112"/><use href="#storey" y="154"/>
                            <path d="M-19.500 196V187Q-16 178 -4 173V196Z" fill="#fdfdfd" stroke="#000" stroke-width="1.300"/>
                            <path d="M-6 172H-2V196H-6Z" fill="#1a1a1a"/>
                            <path d="M-21 196H0V212H-21Z" fill="#e0dde0"/>
                            <path d="M-21 197H0" stroke="#555" stroke-width="2"/>
                            <path d="M-14 197V212M-7 197V212" stroke="#999"/>
                            <path d="M-2 0H1.500V212H-2Z" fill="#000"/>
                            <path d="M-2 235H2V253H-2Z" fill="#000"/>
                        </g>
                        <g id="endstorey">
                            <path d="M-41 -2V-10Q-32 -22 -14 -25H-4V-2Z" fill="#fdfdfd" stroke="#000" stroke-width="1.300"/>
                            <path d="M-41 0H-1V14H-41Z" fill="#d2895a" stroke="#000"/>
                            <path d="M-41 1H-1" stroke="#555" stroke-width="2"/>
                            <path d="M-31 3H-25V13H-31ZM-18 3H-12V13H-18Z" fill="#000"/>
                            <path d="M-41 14H-1V18H-41Z" fill="#f0f1e4" stroke="#000"/>
                        </g>
                    </defs>
                    <!-- long facade, x runs along the eave -->
                    <g transform="matrix(1 -1.238 0 1 1440.700 312.300)">
                        <path d="M-165 212H5V234H-165Z" fill="#fdfdfd"/>
                        <path d="M-165 234H0V253H-165Z" fill="#dcdadd" stroke="#222"/>
                        <path d="M-165 236H0" stroke="#555" stroke-width="3"/>
                        <path d="M-150 236V253M-138 236V253M-116 236V253M-94 236V253M-74 236V253M-52 236V253M-33 236V253M-22 236V253M-11 236V253" stroke="#999"/>
                        <path d="M-165 253H0" stroke="#333" stroke-width="2"/>
                        <use href="#bay" x="-189"/><use href="#bay" x="-168"/><use href="#bay" x="-147"/><use href="#bay" x="-126"/><use href="#bay" x="-104.500"/><use href="#bay" x="-83.500"/><use href="#bay" x="-62.500"/>
                        <path d="M-62 0H-43V212H-62Z" fill="#f0f1e4"/>
                        <use href="#bay" x="-43"/>
                        <path d="M-43 0H0V212H-43Z" fill="#f0f1e4"/>
                        <path d="M-43 3H0M-43 6H0M-43 9H0" stroke="#333"/>
                        <path d="M-41 34V26Q-32 15 -14 13H-4V34Z" fill="#fdfdfd" stroke="#000" stroke-width="1.300"/>
                        <path d="M-41 35H0V48H-41Z" fill="#e0dde0" stroke="#000"/><path d="M-30 35V48M-20 35V48M-10 35V48" stroke="#999"/>
                        <path d="M-43 50H0M-43 54H0" stroke="#000"/>
                        <use href="#endstorey" y="77"/><use href="#endstorey" y="119"/><use href="#endstorey" y="161"/>
                        <path d="M-41 200V192Q-32 181 -14 179H-4V200Z" fill="#fdfdfd" stroke="#000" stroke-width="1.300"/>
                        <path d="M-41 202H0V214H-41Z" fill="#e0dde0" stroke="#555"/><path d="M-30 202V214M-20 202V214M-10 202V214" stroke="#999"/>
                        <path d="M-45 0H-41.500V212H-45ZM-1.500 0H1.500V212H-1.500ZM-1 236H1V253H-1Z" fill="#000"/>
                        <path d="M-165 223H4.500V226H-165Z" fill="#f0f1e4"/>
                        <path d="M-165 218H5M-165 222H5M-165 230H5M5 218V230" fill="none" stroke="#111"/>
                    </g>
                    <!-- slab undersides at the far end -->
                    <g stroke="#000"><path d="M1418 353L1425 342L1437 344V351L1432 355Z" fill="#222"/><path d="M1418 396L1425 384L1437 386V393L1432 398Z" fill="#222"/><path d="M1418 437L1425 426L1437 428V435L1432 439Z" fill="#222"/><path d="M1418 480L1425 468L1437 470V477L1432 481Z" fill="#4f3325"/><path d="M1418 522L1425 509L1437 512V518L1432 523Z" fill="#4f3325"/></g>
                    <!-- main roof -->
                    <path d="M1308.300 287L1363 298.500L1157 554L1102 542Z" fill="#ff4d43" stroke="#000"/>
                    <path d="M1363 298.500L1440.500 312.300L1234 569L1157 554Z" fill="#ff6357" stroke="#000"/>
                    <!-- front block, side wall -->
                    <path d="M1270.700 577L1290 580V795L1252.700 837V625Z" fill="#d2895a" stroke="#000"/>
                    <path d="M1270 575L1290 578V581L1268 580Z" fill="#555" stroke="#000"/>
                    <path d="M1259.300 621L1282.700 593V801L1259.300 829Z" fill="#f0f1e4" stroke="#000"/>
                    <ellipse cx="1271" cy="595" rx="2.500" ry="6.500" fill="#000" transform="rotate(12 1271 595)"/>
                    <g transform="matrix(1 -1.200 0 1 1252.700 625)" fill="#000">
                        <path d="M10 21H27V43H10ZM10 57H27V84H10ZM10 99H27V126H10ZM10 141H27V168H10ZM10 183H27V211H10Z"/>
                        <path d="M0 48H37M0 52H37M0 90H37M0 94H37M0 132H37M0 136H37M0 174H37M0 178H37" stroke="#000" stroke-width=".9"/>
                        <path d="M13 24V42M18 24V42M22 24V42M16 60V80M16 102V122M16 144V164M16 186V206" stroke="#fdfdfd" stroke-width="1.500" stroke-dasharray="5 2"/>
                    </g>
                    <!-- front block, plinth -->
                    <path d="M1252.700 850L1290 808V832L1252.700 879Z" fill="#e0dde0" stroke="#000"/>
                    <path d="M1262 842V866M1268 835V859M1275 827V851M1283 818V842" stroke="#888"/>
                    <path d="M1252.700 876L1290 830" stroke="#555" stroke-width="2"/>
                    <path d="M1063.300 813L1252.700 850V879L1063.300 843Z" fill="#555556" stroke="#000"/>
                    <path d="M1065 822L1251 857M1088 818V846M1110 823V850M1132 828V855M1156 832V859M1177 836V863M1199 840V868M1222 845V872M1245 848V875" stroke="#85868e" stroke-width=".9"/>
                    <path d="M1063.300 840L1252.700 876V879L1063.300 843Z" fill="#333" stroke="#000"/>
                    <path d="M1120 820V851M1122 820V851M1159.500 828V858M1162 828V858" stroke="#000"/>
                    <!-- front wall -->
                    <path d="M1063.300 590L1252.700 625V838L1063.300 803Z" fill="#4f3325" stroke="#000"/>
                    <g transform="matrix(1 .183 0 1 1063.500 592)">
                        <g fill="#d2895a" stroke="#000" stroke-width=".6"><path d="M60 5H68V27H60ZM60 47H68V69H60ZM60 89H68V111H60ZM60 131H68V153H60ZM60 173H68V195H60Z"/></g>
                        <path d="M60 28H98M60 70H98M60 112H98M60 154H98M60 196H98" stroke="#000" stroke-width="2"/>
                        <g fill="#5a5b5a" stroke="#000" stroke-width=".8"><path d="M1 1.500H189V4.500H1ZM1 43H189V46.500H1ZM1 85H189V88.500H1ZM1 127H189V130.500H1ZM1 169H189V172.500H1Z"/><path d="M56.500 0H59.500V210H56.500ZM97 0H99.500V210H97ZM0 0H2.500V210H0ZM186.500 0H189V210H186.500Z"/></g>
                    </g>
                    <path d="M1055.300 802L1063 795V802L1252.700 837L1290 793V790L1297.700 790L1256.700 840Z" fill="#fdfdfd" stroke="#000" stroke-width=".9"/>
                    <path d="M1055.300 802L1256.700 840V850L1055.300 812.300Z" fill="#52534e" stroke="#000"/>
                    <path d="M1055.300 807L1256.700 845" stroke="#000" stroke-width="1.200"/>
                    <path d="M1256.700 840L1297.700 790V799L1256.700 850Z" fill="#f0f1e4" stroke="#000"/>
                    <path d="M1256.700 845L1297.700 795" stroke="#000"/>
                    <!-- front roof -->
                    <path d="M1081.700 539.300L1270.700 575.300L1252.700 625L1063.300 588.300Z" fill="#ff4f46" stroke="#000"/>
                    <path d="M1081.700 539.300L1270.700 575.300" stroke="#000" stroke-width="1.800"/>
                    <path d="M1063.300 588.300L1252.700 625V628.500L1063.300 592Z" fill="#1d1d1d" stroke="#000" stroke-width=".6"/>
                </svg>

                <!-- view cube -->
                <svg class="absolute right-0 top-[77px] w-[110px] h-[110px]" viewBox="1735 250 110 110">
                    <path d="M1740 320A65 36 0 1 0 1870 320A65 36 0 1 0 1740 320ZM1755 319A50 26 0 1 0 1855 319A50 26 0 1 0 1755 319Z" fill="#e6f1f4" fill-rule="evenodd" stroke="#d3c8c6"/>
                    <ellipse cx="1812" cy="318" rx="31" ry="12" fill="#000" opacity=".12"/>
                    <ellipse cx="1816" cy="317" rx="24" ry="10" fill="#000" opacity=".15"/>
                    <path d="M1791.700 256L1835.700 262.700L1820 283.300L1772.300 274.300Z" fill="#f1f4f4" stroke="#8b8d92"/>
                    <path d="M1772.300 274.300L1820 283.300L1819 327.300L1774.300 317.300Z" fill="#e6e5e8" stroke="#777a80"/>
                    <path d="M1835.700 262.700L1820 283.300L1819 327.300L1834.300 303.300Z" fill="#e1e2e5" stroke="#777a80"/>
                    <text x="1783" y="309" font-size="25" font-weight="300" fill="#8b9098" font-family="Noto Sans CJK SC">右</text>
                    <path d="M1803 261L1792 273M1797 268L1816 270M1808 269L1804 273" fill="none" stroke="#a3a6ab" stroke-width="1.300"/>
                    <path d="M1824 303L1826 288M1826 291L1831 283M1828 297L1832 290M1825 308L1830 299" fill="none" stroke="#a9abb0"/>
                    <path d="M1741 303L1760 298M1744 297L1758 306M1750 307L1755 296M1743 300L1761 303M1747 305L1752 297M1754 306L1759 299M1766 348L1790 343M1771 341L1786 354M1778 355L1781 340M1767 351L1789 349M1774 345L1791 352M1772 352L1777 343M1784 350L1787 341" fill="none" stroke="#aaa6a9" stroke-width="1.200"/>
                </svg>
            </div>

            <!-- View control bar -->
            <div class="h-[22px] pb-0.5 shrink-0 flex items-center bg-[#e8f1f1]">
                <button class="ml-[26px] w-[77px] text-left text-[14px] font-['Liberation_Mono',monospace]">1 : 100</button>
                <div class="flex items-center [&>button]:w-7 [&>button]:flex [&>button]:justify-center [&_svg]:size-5">
                    <button aria-label="详细程度"><svg viewBox="0 0 20 20"><rect x="1" y="2" width="18" height="15" fill="#f3f3f3" stroke="#555a63" stroke-width="2"/><path d="M2 3H7V8H2ZM13 3H18V8H13ZM7 8H13V12H7ZM2 12H7V16H2ZM13 12H18V16H13Z" fill="#555a63"/></svg></button>
                    <button aria-label="视觉样式"><svg viewBox="0 0 20 20"><path d="M1 8L6 3H19V12L14 17H1Z" fill="url(#blue)" stroke="#23639a" stroke-width="1.500"/><path d="M1 8H14L19 3M14 8V17" fill="none" stroke="#23639a" stroke-width="1.300"/></svg></button>
                    <button aria-label="日光路径"><svg viewBox="0 0 20 20"><path d="M8 0V16M0 8H16M2 2L14 14M14 2L2 14" stroke="#d9951a" stroke-width="1.500"/><circle cx="8" cy="8" r="5" fill="#ffe58a" stroke="#d9951a"/><use href="#redx" x="10" y="8"/></svg></button>
                    <button aria-label="阴影"><svg viewBox="0 0 20 20"><path d="M2 14Q8 10 14 14L8 18Z" fill="#777"/><circle cx="9" cy="7.500" r="6" fill="#d3ecfb" stroke="#2f7dbb" stroke-width="1.500"/><use href="#redx" x="10" y="9"/></svg></button>
                    <button aria-label="渲染"><svg viewBox="0 0 20 20"><path d="M1 6L4 7L6 15H13L15 7Q10 3 5 7M8 4H11" fill="#e8e9eb" stroke="#5d626b" stroke-width="1.500"/><use href="#bulb" x="12" y="5"/></svg></button>
                    <button aria-label="裁剪视图"><svg viewBox="0 0 20 20"><path d="M5 1V13H0M1 4H17V16" fill="none" stroke="#2d6d9e" stroke-width="3"/><path d="M5 8H12V13H5Z" fill="#9fd3f0" stroke="#2d6d9e"/><path d="M0 16H9" stroke="#444" stroke-width="2" stroke-dasharray="3 2"/><use href="#redx" x="10" y="7"/></svg></button>
                    <button aria-label="显示裁剪区域"><svg viewBox="0 0 20 20"><path d="M5 1V13H0M1 4H14V16" fill="none" stroke="#2d6d9e" stroke-width="3"/><path d="M5 7H11V13H5Z" fill="#9fd3f0"/><path d="M0 16H12" stroke="#444" stroke-width="2" stroke-dasharray="3 2"/><use href="#bulb" x="12" y="3"/></svg></button>
                    <button aria-label="锁定三维视图"><svg viewBox="0 0 20 20"><path d="M2 8L7 2H13L18 8V17H3Z" fill="#e5e6e8" stroke="#4b4f57" stroke-width="1.500"/><path d="M4 17V9L8 5L12 9" fill="none" stroke="#4b4f57" stroke-width="1.500"/><rect x="10" y="12" width="8" height="6" fill="#9fc9a8" stroke="#2f6d5a"/><path d="M12 12V9H16V12" fill="none" stroke="#2f6d5a"/></svg></button>
                    <button aria-label="临时隐藏"><svg viewBox="0 0 20 20"><path d="M1 4L5 11L13 7L18 3L19 8" fill="none" stroke="#4b5560" stroke-width="1.300"/><circle cx="7" cy="12" r="3.500" fill="#cbe6f5" stroke="#4b5560"/><circle cx="15" cy="9" r="3.500" fill="#cbe6f5" stroke="#4b5560"/></svg></button>
                    <button aria-label="显示隐藏图元"><svg viewBox="0 0 20 20"><use href="#bulb" x="6" y="4"/></svg></button>
                    <button aria-label="临时视图属性"><svg viewBox="0 0 20 20"><rect x="2" y="4" width="16" height="13" fill="#eee" stroke="#333" stroke-width="2" stroke-dasharray="3 1"/><path d="M4 7H9V14H4Z" fill="#ccc"/><circle cx="13" cy="12" r="3" fill="#fff" stroke="#333" stroke-width="1.500"/></svg></button>
                    <button aria-label="分析模型"><svg viewBox="0 0 20 20"><path d="M2 17V6L6 2H15V12M2 6H11L15 2M6 6V17M11 6V17M2 10H15" fill="none" stroke="#4b4f57" stroke-width="1.500"/><path d="M2 12V18M8 12V18" stroke="#c8322b" stroke-width="1.800"/><use href="#bulb" x="11" y="5"/></svg></button>
                    <button aria-label="位移集"><svg viewBox="0 0 20 20"><path d="M6 5L9 2H18V12L14 15H6Z" fill="#c4c7cc" stroke="#4b4f57" stroke-width="1.500"/><path d="M1 8L3 6H12V15L10 17H3V13H1Z" fill="#e6e7e9" stroke="#4b4f57" stroke-width="1.400"/><path d="M3 9H10V17M10 9L12 6" fill="none" stroke="#4b4f57"/></svg></button>
                    <button aria-label="约束"><svg viewBox="0 0 20 20"><path d="M2 1V18M18 1V10M2 4H18" stroke="#4b4f57" stroke-width="1.500" fill="none"/><path d="M2 4L6 1.500V6.500ZM18 4L14 1.500V6.500Z" fill="#4b4f57"/><path d="M2 16H10" stroke="#4b4f57" stroke-dasharray="2 2"/><rect x="11" y="12" width="8" height="6" fill="#777"/><path d="M13 12V9H17V12" fill="none" stroke="#555" stroke-width="1.500"/></svg></button>
                </div>
                <button class="ml-1.5" aria-label="收起"><svg class="w-2 h-3" viewBox="0 0 8 12"><path d="M6 1L2 6L6 11" fill="none" stroke="#333" stroke-width="1.800"/></svg></button>
                <div class="flex-1 h-full pl-9 flex justify-center"><div class="w-[22px] h-full bg-[#c9c9ca]"></div></div>
            </div>
        </section>
    </main>

    <!-- Status bar -->
    <footer class="h-[31px] shrink-0 flex items-center border-t border-[#8c8c8f] bg-[#d5d5d5] whitespace-nowrap">
        <span class="w-[753px]">拖动</span>
        <button aria-label="工作集"><svg class="size-5" viewBox="0 0 20 20"><g fill="#8f8f8f" stroke="#fff" stroke-width=".8"><path d="M1 9L4 6L8 9V18H1ZM12 9L16 6L19 9V18H12ZM7 10L10 7L13 10V19H7Z"/><circle cx="10" cy="3.500" r="3"/><circle cx="4.500" cy="5" r="2.500"/><circle cx="15.500" cy="5" r="2.500"/></g></svg></button>
        <div class="relative ml-2">
            <select aria-label="活动工作集" disabled class="block appearance-none w-[254px] h-6 border border-[#e6e6e6] bg-[#fdfdfd]"></select>
            <svg class="absolute right-1 top-2 w-2.5 h-2" viewBox="0 0 10 8"><path d="M1 2L5 6L9 2" fill="none" stroke="#aaa"/></svg>
        </div>
        <button class="ml-2 flex items-center gap-1.5 text-[#222]"><svg class="size-5" viewBox="0 0 20 20"><path d="M6 1H17V6L12 9L10 14H5L8 7Z" fill="#b0b0b0" stroke="#fff" stroke-width="1.300"/><path d="M1 16L4 13H8L11 19H1Z" fill="#8f8f8f"/></svg>:0</button>
        <button class="ml-5" aria-label="设计选项"><svg class="size-5" viewBox="0 0 20 20"><rect x="1" y="1" width="18" height="18" fill="#fff" stroke="#2f3948" stroke-width="1.500"/><rect x="1" y="1" width="18" height="4" fill="#2f3948"/><path d="M3 8H7M9 8H16M6 12H9M11 12H16M6 16H9M11 16H16" stroke="#2f3948" stroke-width="1.800"/></svg></button>
        <button class="ml-2.5" aria-label="添加到集"><svg class="size-5" viewBox="0 0 20 20"><path d="M1 1H19V19H10V13H1Z" fill="#a3a3a3"/><path d="M3 16H12M9 12L13 16L9 19" fill="none" stroke="#fff" stroke-width="1.300"/></svg></button>
        <div class="relative ml-2">
            <select aria-label="活动设计选项" disabled class="block appearance-none w-[256px] h-6 pl-0.5 border border-[#e6e6e6] bg-[#fdfdfd] text-[#777]"><option>主模型</option></select>
            <svg class="absolute right-1 top-2 w-2.5 h-2" viewBox="0 0 10 8"><path d="M1 2L5 6L9 2" fill="none" stroke="#aaa"/></svg>
        </div>
        <div class="ml-auto flex items-center [&>button]:w-[30px] [&>button]:flex [&>button]:justify-center [&_svg]:size-5">
            <button aria-label="选择链接"><svg viewBox="0 0 20 20"><g fill="none" stroke="#d9a21b" stroke-width="2.500"><rect x="1.500" y="2.500" width="8" height="5" rx="2.500"/><rect x="10.500" y="2.500" width="8" height="5" rx="2.500"/></g><use href="#arrowcur" x="7" y="5"/></svg></button>
            <button aria-label="选择基线图元"><svg viewBox="0 0 20 20"><path d="M1 12L8 6H19L14 12ZM3 8L9 2H19L15 7M1 16H13" fill="#cfe8f8" stroke="#1f6faf" stroke-width="1.500"/><use href="#arrowcur" x="10" y="5"/></svg></button>
            <button aria-label="选择锁定图元"><svg viewBox="0 0 20 20"><path d="M2 1H13V5H11V9H14V13H1V9H4V5H2Z" fill="#f08a4b" stroke="#a8431b"/><path d="M4 3H8M3 11H8" stroke="#ffd9bd"/><path d="M7.500 13V19" stroke="#555" stroke-width="1.500"/><use href="#arrowcur" x="10" y="5"/></svg></button>
            <button aria-label="按面选择图元"><svg viewBox="0 0 20 20"><path d="M2 4L13 1V15L2 18Z" fill="#9fd3f0" stroke="#1f6faf" stroke-width="1.500"/><use href="#arrowcur" x="10" y="5"/></svg></button>
            <button aria-label="选择时拖曳图元"><svg viewBox="0 0 20 20"><path d="M6 0V12M0 6H12M4.500 2L6 0L7.500 2M4.500 10L6 12L7.500 10M2 4.500L0 6L2 7.500M10 4.500L12 6L10 7.500" stroke="#111" fill="none"/><use href="#arrowcur" x="9" y="6"/></svg></button>
            <button aria-label="后台进程"><svg viewBox="0 0 20 20"><circle cx="10" cy="10" r="6.500" fill="none" stroke="#a6a6a6" stroke-width="4.500" stroke-dasharray="4.100 1"/></svg></button>
            <button aria-label="过滤器"><svg viewBox="0 0 20 20"><path d="M1 2H19L12 10V19L8 16V10Z" fill="#a9acb1" stroke="#444952" stroke-width="1.300"/><path d="M5 4H11L9 8Z" fill="#fff"/></svg></button>
        </div>
        <span class="-ml-1 w-[9px] overflow-hidden">:0</span>
    </footer>
</body>
</html>
